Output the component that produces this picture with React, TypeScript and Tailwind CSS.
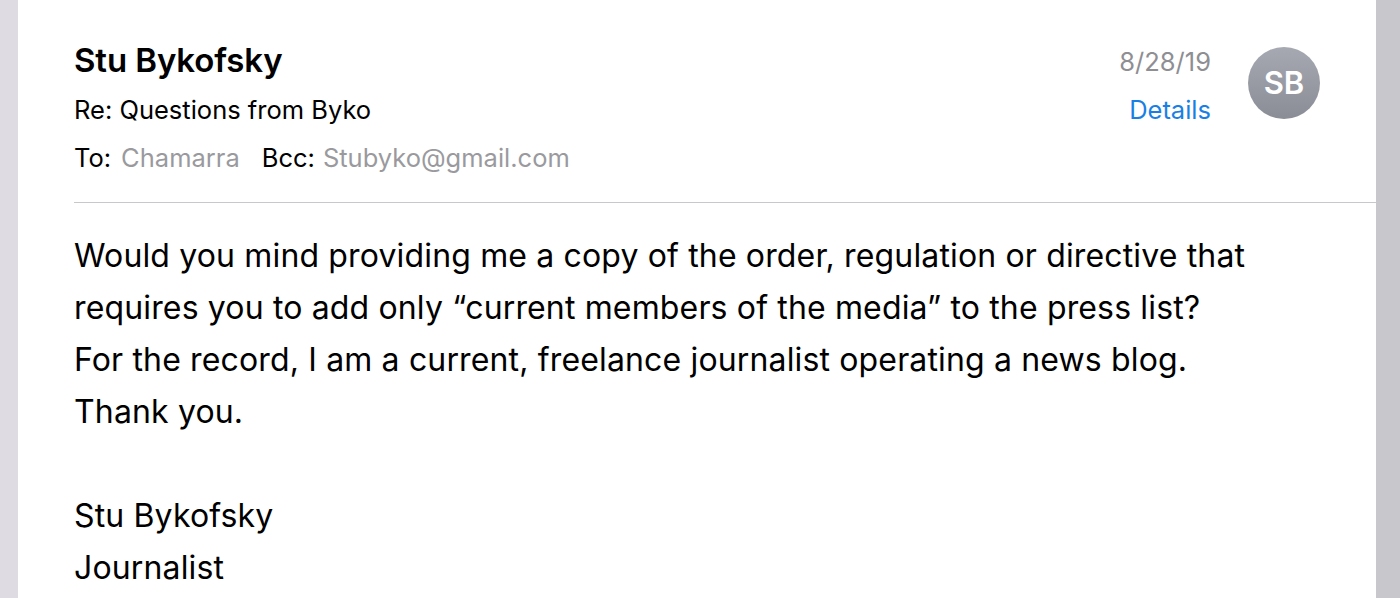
import React from "react";

const bodyLines = [
  "Would you mind providing me a copy of the order, regulation or directive that",
  "requires you to add only \u201Ccurrent members of the media\u201D to the press list?",
  "For the record, I am a current, freelance journalist operating a news blog.",
  "Thank you.",
];

const App = () => {
  return (
    <div
      className="flex h-[598px] w-full overflow-hidden bg-white text-black"
      style={{ fontFamily: "Inter, 'Liberation Sans', sans-serif" }}
    >
      {/* left split-view edge */}
      <div className="w-[18px] shrink-0 bg-[#dedbe3]" />

      <div className="flex-1 bg-white">
        {/* Header */}
        <div className="flex items-start pl-[56px] pr-[56px] pt-[40px]">
          <div className="flex-1">
            <div className="text-[33px] font-semibold leading-[40px] tracking-[-0.1px]">
              Stu Bykofsky
            </div>
            <div className="mt-[13px] text-[25.5px] leading-[34px]">
              Re: Questions from Byko
            </div>
            <div className="mt-[14px] flex text-[25.5px] leading-[34px]">
              <span>To:</span>
              <span className="ml-[10px] text-[#9a9a9e]">Chamarra</span>
              <span className="ml-[22px]">Bcc:</span>
              <span className="ml-[8px] text-[#9a9a9e]">Stubyko@gmail.com</span>
            </div>
          </div>

          <div className="flex flex-col items-end pt-[5px] text-[25.5px] leading-[34px]">
            <span className="text-[#8e8e93]">8/28/19</span>
            <span className="mt-[14px] text-[#1a7fe4]">Details</span>
          </div>

          <div className="ml-[37px] mt-[7px] flex h-[72px] w-[72px] items-center justify-center rounded-full bg-gradient-to-b from-[#a6a9b2] to-[#8a8d96]">
            <span className="text-[31px] font-semibold text-white">SB</span>
          </div>
        </div>

        {/* Divider */}
        <div className="ml-[56px] mt-[27px] h-px bg-[#c8c7cc]" />

        {/* Body */}
        <div className="pl-[56px] pt-[27px] text-[32px] leading-[52px] tracking-[0.15px]">
          {bodyLines.map((line) => (
            <div key={line} className="whitespace-nowrap">
              {line}
            </div>
          ))}
          <div className="h-[52px]" />
          <div>Stu Bykofsky</div>
          <div>Journalist</div>
        </div>
      </div>

      {/* right split-view edge */}
      <div className="w-[24px] shrink-0 bg-[#c8c7cc]" />
    </div>
  );
};

export default App;
